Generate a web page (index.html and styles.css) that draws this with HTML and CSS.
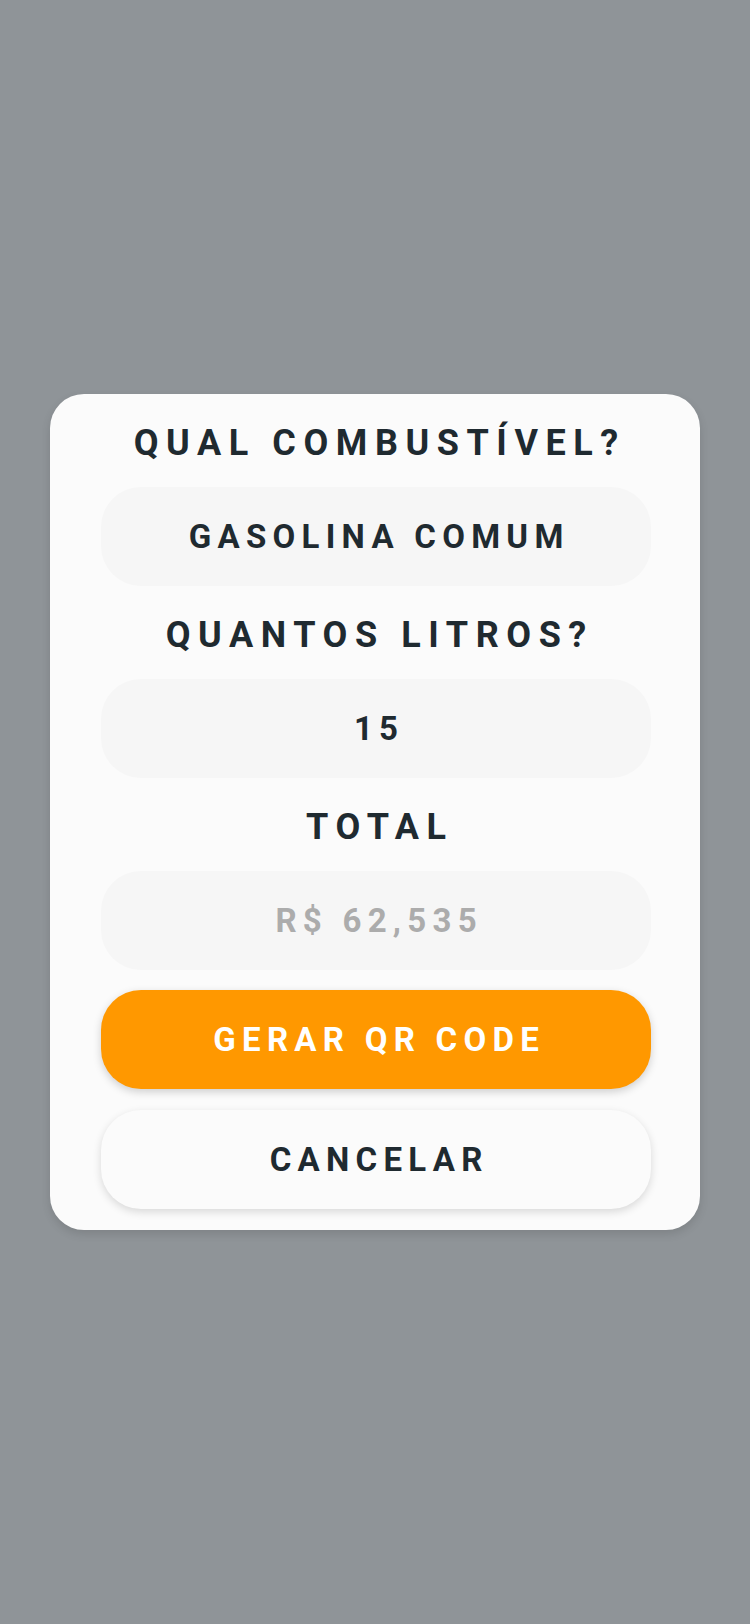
FILE: index.html
```html
<!DOCTYPE html>
<html lang="pt-BR">
<head>
<meta charset="utf-8">
<title>Abastecer</title>
<link rel="stylesheet" href="styles.css">
</head>
<body>
<div class="screen">
  <div class="modal">
    <div class="label">QUAL COMBUSTÍVEL?</div>
    <div class="field">GASOLINA COMUM</div>
    <div class="label">QUANTOS LITROS?</div>
    <div class="field">15</div>
    <div class="label">TOTAL</div>
    <div class="field field-muted">R$ 62,535</div>
    <div class="actions">
      <button class="btn btn-primary">GERAR QR CODE</button>
      <button class="btn btn-secondary">CANCELAR</button>
    </div>
  </div>
</div>
</body>
</html>
```
FILE: styles.css
```css
* { box-sizing: border-box; }
html, body { margin: 0; padding: 0; }
body {
  background: #8f9498;
  font-family: Roboto, "Liberation Sans", sans-serif;
}
.screen {
  width: 750px;
  height: 1624px;
  display: flex;
  align-items: center;
  justify-content: center;
}
.modal {
  width: 650px;
  height: 836px;
  background: #fbfbfb;
  border-radius: 34px;
  box-shadow: 0 4px 10px rgba(0,0,0,0.12);
  padding: 0 49px 21px 51px;
  display: flex;
  flex-direction: column;
}
.label {
  height: 93px;
  padding-top: 4px;
  display: flex;
  align-items: center;
  justify-content: center;
  font-size: 36px;
  font-weight: 700;
  letter-spacing: 0.21em;
  color: #1f2a30;
  padding-left: 0.21em;
}
.field {
  height: 99px;
  border-radius: 40px;
  background: #f6f6f6;
  display: flex;
  align-items: center;
  justify-content: center;
  font-size: 33px;
  font-weight: 700;
  letter-spacing: 0.19em;
  padding-left: 0.19em;
  color: #1f2a30;
}
.field-muted { color: #acacac; }
.actions {
  margin-top: 20px;
  display: flex;
  flex-direction: column;
  gap: 21px;
}
.btn {
  height: 99px;
  border: none;
  border-radius: 40px;
  font-family: Roboto, "Liberation Sans", sans-serif;
  font-size: 33px;
  font-weight: 700;
  letter-spacing: 0.19em;
  padding: 0 0 0 0.19em;
  cursor: pointer;
}
.btn-primary {
  background: #ff9800;
  color: #ffffff;
  box-shadow: 0 3px 8px rgba(0,0,0,0.18);
}
.btn-secondary {
  background: #fbfbfb;
  color: #1f2a30;
  box-shadow: 0 3px 8px rgba(0,0,0,0.14);
}
```
